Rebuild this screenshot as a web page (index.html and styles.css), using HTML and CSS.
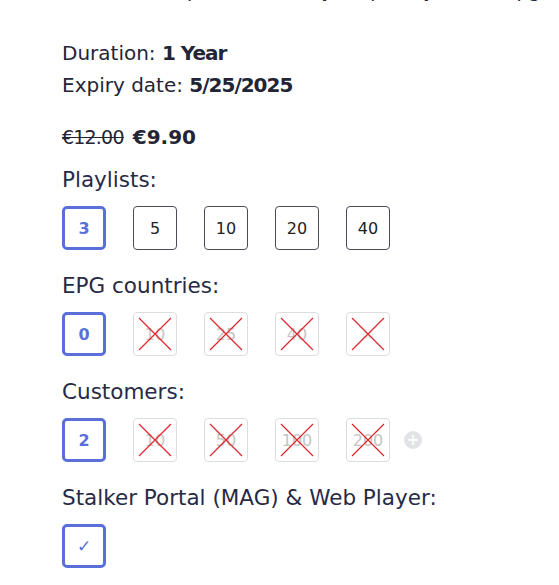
FILE: index.html
```html
<!DOCTYPE html>
<html>
<head>
  <meta charset="utf-8" />
	<title>Plan</title>
	<link rel="stylesheet" href="styles.css">
</head>
<body>

<div class='plan'>
	<p class='cut'>Choose the options that fit your plan, you can upgrade or change them at any time.</p>

	<div class='info'>
		<p>Duration: <b>1 Year</b></p>
		<p>Expiry date: <b>5/25/2025</b></p>
	</div>

	<div class='price'>
		<s>€12.00</s> <b>€9.90</b>
	</div>

	<div class='opt'>
		<h3>Playlists:</h3>
		<div class='opt-list'>
			<span class='box on'>3</span>
			<span class='box'>5</span>
			<span class='box'>10</span>
			<span class='box'>20</span>
			<span class='box'>40</span>
		</div>
	</div>

	<div class='opt'>
		<h3>EPG countries:</h3>
		<div class='opt-list'>
			<span class='box on'>0</span>
			<span class='box off'>10<svg viewBox="0 0 44 44"><path d="M6 6L38 38M38 6L6 38"/></svg></span>
			<span class='box off'>25<svg viewBox="0 0 44 44"><path d="M6 6L38 38M38 6L6 38"/></svg></span>
			<span class='box off'>40<svg viewBox="0 0 44 44"><path d="M6 6L38 38M38 6L6 38"/></svg></span>
			<span class='box off'><i>∞</i><svg viewBox="0 0 44 44"><path d="M6 6L38 38M38 6L6 38"/></svg></span>
		</div>
	</div>

	<div class='opt'>
		<h3>Customers:</h3>
		<div class='opt-list'>
			<span class='box on'>2</span>
			<span class='box off'>10<svg viewBox="0 0 44 44"><path d="M6 6L38 38M38 6L6 38"/></svg></span>
			<span class='box off'>50<svg viewBox="0 0 44 44"><path d="M6 6L38 38M38 6L6 38"/></svg></span>
			<span class='box off'>100<svg viewBox="0 0 44 44"><path d="M6 6L38 38M38 6L6 38"/></svg></span>
			<span class='box off'>200<svg viewBox="0 0 44 44"><path d="M6 6L38 38M38 6L6 38"/></svg></span>
			<span class='more'>+</span>
		</div>
	</div>

	<div class='opt'>
		<h3>Stalker Portal (MAG) &amp; Web Player:</h3>
		<div class='opt-list'>
			<span class='box on check'>✓</span>
		</div>
	</div>
</div>

</body>
</html>
```

FILE: styles.css
```css
*{margin:0;padding:0;}
body{
	font-family: "DejaVu Sans", "Noto Sans", sans-serif;
	color:#232536;
	background:#fff;
}
.plan{
	padding-left:62px;
	width:480px;
}
.cut{
	margin-top:-20px;
	height:24px;
	font-size:19px;
	line-height:20px;
	white-space:nowrap;
	overflow:hidden;
}
.info{
	margin-top:33px;
	font-size:20px;
	line-height:32px;
}
.info b{
	font-weight:700;
	letter-spacing:-1px;
}
.price{
	margin-top:20px;
	font-size:19px;
	line-height:32px;
}
.price s{
	letter-spacing:-0.8px;
}
.price b{
	font-size:20px;
	font-weight:700;
	margin-left:3px;
}
.opt{
	margin-top:11px;
}
.opt + .opt{
	margin-top:20px;
}
.opt h3{
	font-size:21.5px;
	font-weight:400;
	line-height:32px;
	color:#272a45;
}
.opt-list{
	margin-top:10px;
	display:flex;
	align-items:center;
	gap:27px;
}
.box{
	position:relative;
	width:44px;
	height:44px;
	box-sizing:border-box;
	border:1px solid #4a4d57;
	border-radius:4px;
	display:flex;
	align-items:center;
	justify-content:center;
	font-size:16px;
	color:#222;
}
.box.on{
	border:3px solid #5b6fdb;
	border-radius:5px;
	color:#5b6fdb;
	font-weight:700;
}
.box.off{
	border-color:#dcdde2;
	color:#c4c4c4;
}
.box.off i{
	font-style:normal;
	color:#e4e4e4;
}
.box svg{
	position:absolute;
	left:-1px;
	top:-1px;
	width:44px;
	height:44px;
}
.box svg path{
	stroke:#e0262b;
	stroke-width:1.2;
	fill:none;
}
.check{
	font-weight:400 !important;
	font-size:17px;
}
.more{
	margin-left:-13px;
	width:18px;
	height:18px;
	border-radius:50%;
	background:#e2e3e6;
	color:#fff;
	font-size:15px;
	line-height:18px;
	text-align:center;
	font-weight:700;
}
```
